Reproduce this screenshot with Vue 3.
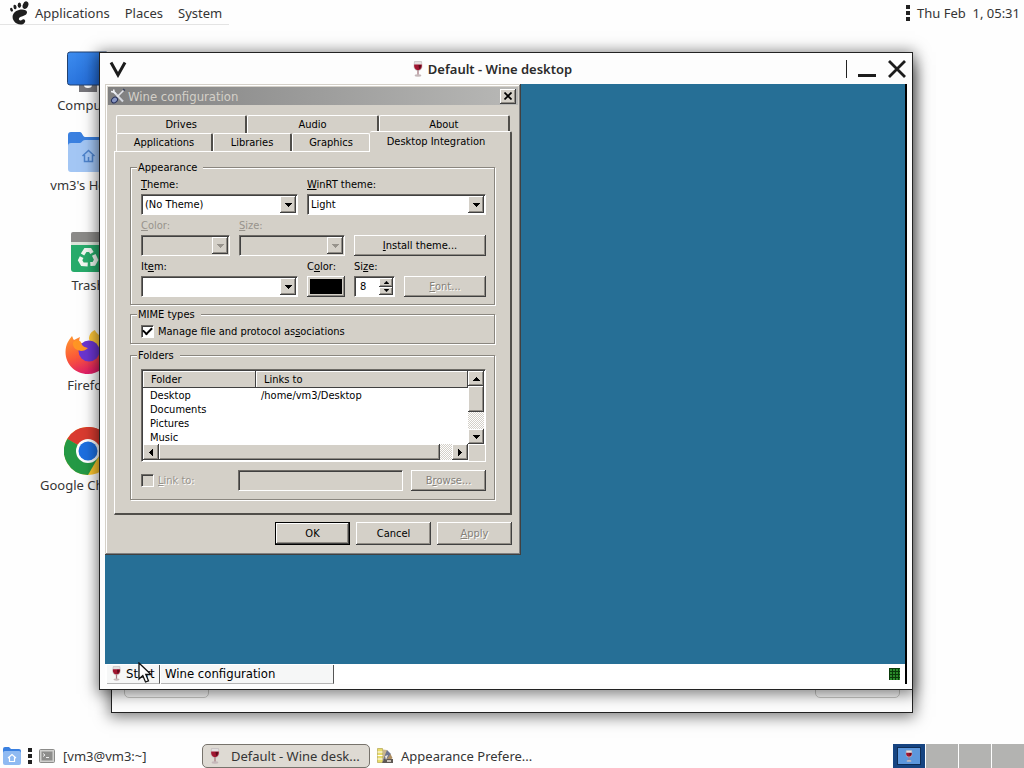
<script setup>
import { ref } from 'vue'

const shortcuts = [
  { id: 'computer', label: 'Computer' },
  { id: 'home', label: "vm3's Home" },
  { id: 'trash', label: 'Trash' },
  { id: 'firefox', label: 'Firefox' },
  { id: 'chrome', label: 'Google Chrome' }
]

const backTabs = ['Drives', 'Audio', 'About']
const frontTabs = ['Applications', 'Libraries', 'Graphics', 'Desktop Integration']
const activeTab = ref('Desktop Integration')

const folders = [
  { name: 'Desktop', link: '/home/vm3/Desktop' },
  { name: 'Documents', link: '' },
  { name: 'Pictures', link: '' },
  { name: 'Music', link: '' }
]

const theme = ref('(No Theme)')
const winrt = ref('Light')
const item = ref('')
const fontSize = ref('8')
const manageMime = ref(true)
const linkTo = ref(false)
const workspace = ref(1)
</script>

<template>
  <div class="screen">
    <svg class="defs" aria-hidden="true">
      <symbol id="glass" viewBox="0 0 16 16">
        <path d="M4.500.5h7l.5 4.500c0 3-1.500 4.500-4 4.500s-4-1.500-4-4.500z" fill="#e3dfe0" stroke="#b9b4b6" stroke-width=".6" />
        <path d="M4.200 3.500h7.600c.5 3.500-1.300 5.500-3.800 5.500S3.700 7 4.200 3.500z" fill="#a01530" />
        <path d="M8.500 4h2.600c0 2-.8 3.500-2 4z" fill="#5b0a1c" />
        <path d="M8 9v5" stroke="#a67a82" stroke-width="1.300" />
        <ellipse cx="8" cy="14.500" rx="3.300" ry="1.200" fill="#c5b8ba" />
      </symbol>
      <symbol id="down" viewBox="0 0 7 4"><path d="M0 0h7v1H6v1H5v1H4v1H3V3H2V2H1V1H0z" fill="currentColor" /></symbol>
      <symbol id="up" viewBox="0 0 7 4"><path d="M0 4h7V3H6V2H5V1H4V0H3v1H2v1H1v1H0z" fill="currentColor" /></symbol>
      <symbol id="left" viewBox="0 0 4 7"><path d="M4 0v7H3V6H2V5H1V4H0V3h1V2h1V1h1V0z" fill="currentColor" /></symbol>
      <symbol id="right" viewBox="0 0 4 7"><path d="M0 0v7h1V6h1V5h1V4h1V3H3V2H2V1H1V0z" fill="currentColor" /></symbol>
    </svg>

    <header class="top-panel">
      <nav class="menus">
        <svg class="foot" viewBox="0 0 20 24">
          <g fill="#1f1f1f">
            <ellipse cx="16.500" cy="4.200" rx="2.700" ry="3.900" transform="rotate(22 16.500 4.200)" />
            <ellipse cx="10.400" cy="4.300" rx="1.700" ry="2.700" />
            <ellipse cx="6" cy="6" rx="1.500" ry="2.300" transform="rotate(-15 6 6)" />
            <ellipse cx="2.500" cy="8.800" rx="1.300" ry="2" transform="rotate(-25 2.500 8.800)" />
            <path d="M18 11.500c.3-3.500-7-4-10.800-1.400-3.900 2.600-4.600 6.200-2.400 9.600 2 3.500 6.500 4.600 9.500 3.300 2.600-1.300 2.400-4.600.4-4.800-1.600-.2-1.600 1.400-3.300 1.200-1.800-.2-2.200-2-.4-3.100 2.200-1.300 6.700-1.600 7-4.800z" />
          </g>
        </svg>
        <a href="#">Applications</a>
        <a href="#">Places</a>
        <a href="#">System</a>
      </nav>
      <div class="clock">
        <span class="grip"></span>
        <time>Thu Feb &nbsp;1, 05:31</time>
      </div>
    </header>

    <main class="desktop">
      <div class="shortcuts">
        <a v-for="s in shortcuts" :key="s.id" href="#" class="shortcut" :class="s.id">
          <svg v-if="s.id === 'computer'" viewBox="0 0 48 48">
            <defs>
              <linearGradient id="scr" x1="0" y1="0" x2="1" y2="1">
                <stop offset="0" stop-color="#3d8df0" />
                <stop offset="1" stop-color="#1c62cf" />
              </linearGradient>
            </defs>
            <path d="M15 37h18v8H15z" fill="#77767b" />
            <path d="M20 38h8a4 3 0 0 1-8 0z" fill="#fff" />
            <rect x="3.500" y="5" width="41" height="33" rx="2.500" fill="url(#scr)" stroke="#23416e" />
          </svg>
          <svg v-else-if="s.id === 'home'" viewBox="0 0 48 48">
            <path d="M4 8a3 3 0 0 1 3-3h9c2 0 3 5 5 5h20a3 3 0 0 1 3 3v10H4z" fill="#3a80e0" />
            <path d="M4 19a3 3 0 0 1 3-3h9c2 0 2-3 5-3h20a3 3 0 0 1 3 3v26a3 3 0 0 1-3 3H7a3 3 0 0 1-3-3z" fill="#a3c6f4" />
            <path d="M18.500 29l6-5.500 6 5.500M20.500 28v6.500h8V28M24.500 34v-4" fill="none" stroke="#4d83cc" stroke-width="1.500" />
          </svg>
          <svg v-else-if="s.id === 'trash'" viewBox="0 0 48 48">
            <path d="M7 18h36v24a3 3 0 0 1-3 3H10a3 3 0 0 1-3-3z" fill="#27ab6b" />
            <path d="M7 14h36v4H7z" fill="#dce3da" />
            <path d="M7 7a2 2 0 0 1 2-2h32a2 2 0 0 1 2 2v8H7z" fill="#8b8a88" />
            <g fill="none" stroke="#f1f8f2" stroke-width="4">
              <path d="M18.500 27.500l3-4.500h4.500l2 3" />
              <path d="M18.500 27.500l3-4.500h4.500l2 3" transform="rotate(120 24 31)" />
              <path d="M18.500 27.500l3-4.500h4.500l2 3" transform="rotate(240 24 31)" />
            </g>
          </svg>
          <svg v-else-if="s.id === 'firefox'" viewBox="0 0 48 48">
            <defs>
              <linearGradient id="fox" x1="0" y1="0" x2=".4" y2="1">
                <stop offset="0" stop-color="#ff9a2e" />
                <stop offset=".55" stop-color="#fb5a38" />
                <stop offset="1" stop-color="#e01f66" />
              </linearGradient>
            </defs>
            <path d="M25 12c0-5 3-8 6-9 1 5 14 9 14 24l-10 8z" fill="#fdc63a" />
            <path d="M1.500 25C1.500 17 5 13 8 9c1 2 1 3 2 4 2-1 4-2 6-3-1 3-1 4 0 6 4 0 7 1 9 4l17 3c3 2 3 4 3 6-2 10-10 18-21 18C11 47 1.500 37 1.500 25z" fill="url(#fox)" />
            <circle cx="25" cy="24" r="10.500" fill="#6b35d0" />
            <path d="M17 15c-3-3-9-2-8 3 1 4 4 5 8 6 3 0 5-1 7-3-3-1-6-1-7-6z" fill="#ff9524" />
          </svg>
          <svg v-else viewBox="0 0 48 48">
            <circle cx="24" cy="24" r="24" fill="#fbc530" />
            <path d="M24 24L3.200 12A24 24 0 0 1 44.800 12z" fill="#d93b30" />
            <path d="M24 12h20.800A24 24 0 0 0 24 0z" fill="#d93b30" />
            <path d="M3.200 12A24 24 0 0 0 24 48l10.400-18z" fill="#249945" />
            <path d="M24 24L3.200 12l9 16z" fill="#249945" />
            <circle cx="24" cy="24" r="12" fill="#fff" />
            <circle cx="24" cy="24" r="9.500" fill="#1d6fe0" />
          </svg>
          <span>{{ s.label }}</span>
        </a>
      </div>

      <section class="back-window">
        <span class="ghost help"></span>
        <span class="ghost close"></span>
      </section>

      <section class="window">
        <div class="window-title">
          <button class="wm-btn shade" aria-label="Window menu">
            <svg viewBox="0 0 18 18"><path d="M2 2.500L9 15l7-12.500" fill="none" stroke="#1c1c1c" stroke-width="3" /></svg>
          </button>
          <h1>
            <svg><use href="#glass" /></svg>
            Default - Wine desktop
          </h1>
          <div class="wm-controls">
            <button class="wm-btn" aria-label="Minimize">
              <svg viewBox="0 0 18 18"><path d="M0 15.500h18" stroke="#1c1c1c" stroke-width="3" /></svg>
            </button>
            <button class="wm-btn" aria-label="Close">
              <svg viewBox="0 0 18 18"><path d="M1 1l16 16M17 1L1 17" stroke="#1c1c1c" stroke-width="2.800" /></svg>
            </button>
          </div>
        </div>

        <div class="wine">
          <div class="wine-desktop">
            <form class="dialog" @submit.prevent>
              <div class="dialog-title">
                <svg viewBox="0 0 16 16">
                  <path d="M3 3l10 10.500" stroke="#d5d8df" stroke-width="2" />
                  <path d="M1 3.500l2.500.5.500-2.500M3.500 3.500L6 6" stroke="#eef0f4" stroke-width="1.600" fill="none" />
                  <path d="M13.500 2.500L7 9" stroke="#e2e4ea" stroke-width="1.600" />
                  <path d="M13 1l2 1.500" stroke="#39435f" stroke-width="1.500" />
                  <ellipse cx="4.500" cy="12" rx="3.200" ry="2.600" fill="#8796c4" stroke="#27315b" transform="rotate(-40 4.500 12)" />
                </svg>
                <h2>Wine configuration</h2>
                <button type="button" class="btn close" aria-label="Close">
                  <svg viewBox="0 0 8 8"><path d="M.5.5l7 7M7.500.5l-7 7" stroke="#000" stroke-width="1.700" /></svg>
                </button>
              </div>

              <div class="dialog-body">
                <div class="tabs back" role="tablist">
                  <button v-for="t in backTabs" :key="t" type="button" role="tab" class="tab">{{ t }}</button>
                </div>
                <div class="tabs front" role="tablist">
                  <button
                    v-for="t in frontTabs"
                    :key="t"
                    type="button"
                    role="tab"
                    class="tab"
                    :class="{ active: t === activeTab }"
                    :aria-selected="t === activeTab"
                  >{{ t }}</button>
                </div>

                <div class="page">
                  <fieldset class="appearance">
                    <legend>Appearance</legend>
                    <div class="row">
                      <div class="field theme">
                        <label for="theme"><u>T</u>heme:</label>
                        <div class="combo">
                          <select id="theme" v-model="theme"><option>(No Theme)</option></select>
                          <span class="btn arrow"><svg><use href="#down" /></svg></span>
                        </div>
                      </div>
                      <div class="field grow">
                        <label for="winrt"><u>W</u>inRT theme:</label>
                        <div class="combo">
                          <select id="winrt" v-model="winrt"><option>Light</option><option>Dark</option></select>
                          <span class="btn arrow"><svg><use href="#down" /></svg></span>
                        </div>
                      </div>
                    </div>
                    <div class="row">
                      <div class="field shade-color disabled">
                        <label for="tcolor"><u>C</u>olor:</label>
                        <div class="combo">
                          <select id="tcolor" disabled></select>
                          <span class="btn arrow"><svg><use href="#down" /></svg></span>
                        </div>
                      </div>
                      <div class="field shade-size disabled">
                        <label for="tsize"><u>S</u>ize:</label>
                        <div class="combo">
                          <select id="tsize" disabled></select>
                          <span class="btn arrow"><svg><use href="#down" /></svg></span>
                        </div>
                      </div>
                      <button type="button" class="btn grow"><u>I</u>nstall theme...</button>
                    </div>
                    <div class="row">
                      <div class="field theme">
                        <label for="item">It<u>e</u>m:</label>
                        <div class="combo">
                          <select id="item" v-model="item"><option value=""></option></select>
                          <span class="btn arrow"><svg><use href="#down" /></svg></span>
                        </div>
                      </div>
                      <div class="field color">
                        <label for="color">C<u>o</u>lor:</label>
                        <button id="color" type="button" class="btn swatch"><span></span></button>
                      </div>
                      <div class="field size">
                        <label for="size">Si<u>z</u>e:</label>
                        <div class="spin">
                          <input id="size" v-model="fontSize" type="text">
                          <div class="spin-btns">
                            <button type="button" class="btn" aria-label="Increase"><svg><use href="#up" /></svg></button>
                            <button type="button" class="btn" aria-label="Decrease"><svg><use href="#down" /></svg></button>
                          </div>
                        </div>
                      </div>
                      <button type="button" class="btn grow" disabled><u>F</u>ont...</button>
                    </div>
                  </fieldset>

                  <fieldset class="mime">
                    <legend>MIME types</legend>
                    <label class="check">
                      <input v-model="manageMime" type="checkbox">
                      <span>Manage file and protocol as<u>s</u>ociations</span>
                    </label>
                  </fieldset>

                  <fieldset class="folders">
                    <legend>Folders</legend>
                    <div class="listview">
                      <table>
                        <thead>
                          <tr><th class="name">Folder</th><th>Links to</th></tr>
                        </thead>
                        <tbody>
                          <tr v-for="f in folders" :key="f.name">
                            <td>{{ f.name }}</td>
                            <td>{{ f.link }}</td>
                          </tr>
                        </tbody>
                      </table>
                      <div class="vscroll">
                        <button type="button" class="btn" aria-label="Scroll up"><svg><use href="#up" /></svg></button>
                        <span class="btn thumb"></span>
                        <button type="button" class="btn end" aria-label="Scroll down"><svg><use href="#down" /></svg></button>
                      </div>
                      <div class="hscroll">
                        <button type="button" class="btn" aria-label="Scroll left"><svg><use href="#left" /></svg></button>
                        <span class="btn thumb"></span>
                        <button type="button" class="btn end" aria-label="Scroll right"><svg><use href="#right" /></svg></button>
                      </div>
                    </div>
                    <div class="link-row">
                      <label class="check disabled">
                        <input v-model="linkTo" type="checkbox" disabled>
                        <span><u>L</u>ink to:</span>
                      </label>
                      <input class="path" type="text" aria-label="Link target" disabled>
                      <button type="button" class="btn" disabled>B<u>r</u>owse...</button>
                    </div>
                  </fieldset>
                </div>

                <div class="actions">
                  <button type="submit" class="btn default">OK</button>
                  <button type="button" class="btn">Cancel</button>
                  <button type="button" class="btn" disabled><u>A</u>pply</button>
                </div>
              </div>
            </form>
          </div>

          <div class="wine-bar">
            <button class="wine-item"><svg><use href="#glass" /></svg>Start</button>
            <button class="wine-item task">Wine configuration</button>
            <span class="tray"></span>
          </div>
        </div>
      </section>

      <svg class="cursor" viewBox="0 0 14 22">
        <path d="M1 1v16l3.800-3.500L7.500 20l3-1.200L7.800 12.500H13z" fill="#fff" stroke="#111" stroke-width="1.300" />
      </svg>
    </main>

    <footer class="bottom-panel">
      <button class="launcher" aria-label="Files">
        <svg viewBox="0 0 20 20">
          <path d="M1 3a2 2 0 0 1 2-2h4l2 2h8a2 2 0 0 1 2 2v4H1z" fill="#3a80e0" />
          <rect x="1" y="5" width="18" height="14" rx="2" fill="#8fbaf2" />
          <path d="M6 12l4-3.500 4 3.500M7.500 11.500v4h5v-4" fill="none" stroke="#fff" stroke-width="1.200" />
        </svg>
      </button>
      <span class="grip"></span>
      <button class="task terminal">
        <svg viewBox="0 0 16 16">
          <rect x=".5" y="1.500" width="15" height="13" rx="1" fill="#d0d0ce" stroke="#8b8b89" />
          <rect x="2.500" y="3.500" width="11" height="9" fill="#8d8d8b" />
          <path d="M4 5.500l2 1.500-2 1.500M7 9.500h3" fill="none" stroke="#eee" />
        </svg>
        [vm3@vm3:~]
      </button>
      <button class="task active">
        <svg><use href="#glass" /></svg>
        Default - Wine desk...
      </button>
      <button class="task">
        <svg viewBox="0 0 16 16">
          <path d="M.5.5h5v14h-5z" fill="#e9dc6a" stroke="#a8993c" stroke-width=".6" />
          <path d="M.5 4h5M.5 7.500h5M.5 11h5" stroke="#fff" />
          <path d="M6 1.500l4 .5 1 4-5 6z" fill="#c9b58e" />
          <path d="M10 2l4 4-5 8-3-2z" fill="#6d7590" />
          <path d="M13.500 6l2 4-6 5H7z" fill="#ad8d60" />
          <path d="M7 11h9v4H5z" fill="#5d5854" />
          <path d="M8 8l3-1-2 5z" fill="#f1e9dc" />
          <path d="M10 12h4v2h-4z" fill="#c9c2b8" />
        </svg>
        Appearance Prefere...
      </button>
      <div class="pager">
        <button
          v-for="n in 4"
          :key="n"
          class="cell"
          :class="{ current: n === workspace }"
          :aria-label="'Workspace ' + n"
          @click="workspace = n"
        >
          <span v-if="n === 1" class="mini"><svg><use href="#glass" /></svg></span>
        </button>
      </div>
    </footer>
  </div>
</template>

<style>
body {
  margin: 0;
  background: #fff;
}
</style>

<style scoped>
* {
  box-sizing: border-box;
}
.screen {
  min-height: 100vh;
  display: grid;
  grid-template-rows: 25px 1fr 24px;
  overflow: hidden;
  background: #fefefe;
  color: #353535;
  font: 13px/18px "Noto Sans", "Open Sans", sans-serif;
}
.defs {
  position: absolute;
  width: 0;
  height: 0;
}
button, input, select {
  margin: 0;
  padding: 0;
  border: 0;
  border-radius: 0;
  background: none;
  color: inherit;
  font: inherit;
  outline: 0;
  appearance: none;
}
a {
  color: inherit;
  text-decoration: none;
}
svg {
  display: block;
  flex: none;
}

/* top panel */
.top-panel {
  display: flex;
  justify-content: space-between;
}
.menus {
  display: flex;
  align-items: center;
  gap: 15px;
  padding: 2px 7px 0 9px;
  border-bottom: 1px solid #e4e4e4;
}
.foot {
  width: 20px;
  height: 24px;
  margin-right: -9px;
}
.clock {
  display: flex;
  align-items: center;
  gap: 7px;
  padding: 1px 4px 0 0;
}
.grip {
  width: 4px;
  height: 16px;
  background: repeating-linear-gradient(#222 0 4px, transparent 4px 6px);
}

/* desktop */
.desktop {
  position: relative;
  min-height: 640px;
}
.shortcuts {
  display: flex;
  flex-direction: column;
  gap: 32px;
  width: 120px;
  margin-left: 28px;
  padding-top: 22px;
}
.shortcut {
  display: flex;
  flex-direction: column;
  align-items: center;
  line-height: 20px;
}
.shortcut.computer {
  margin-bottom: -20px;
}
.shortcut svg {
  width: 48px;
  height: 48px;
}

.back-window,
.window {
  position: absolute;
  border: 1px solid #222;
  background: #fdfdfd;
  box-shadow: 0 2px 14px 2px rgba(0, 0, 0, .5);
}
.back-window {
  top: 40px;
  right: 111px;
  bottom: 31px;
  left: 111px;
  display: flex;
  justify-content: space-between;
  align-items: flex-end;
  padding: 0 12px 14px;
}
.ghost {
  width: 85px;
  height: 30px;
  border: 1px solid #c9c9c6;
  border-radius: 5px;
}
.window {
  top: 27px;
  right: 111px;
  bottom: 54px;
  left: 99px;
  display: flex;
  flex-direction: column;
}
.window-title {
  display: flex;
  align-items: center;
  height: 31px;
}
.window-title h1 {
  flex: 1;
  display: flex;
  align-items: center;
  justify-content: center;
  gap: 2px;
  margin: 0;
  color: #2b2b2b;
  font-size: 13px;
  font-weight: 600;
}
.window-title h1 svg {
  width: 16px;
  height: 16px;
}
.wm-btn {
  display: grid;
  place-items: center;
  width: 30px;
  height: 30px;
}
.wm-btn svg {
  width: 18px;
  height: 18px;
}
.wm-btn.shade {
  width: 36px;
}
.wm-controls {
  display: flex;
  align-items: center;
  padding-left: 6px;
  background: linear-gradient(#222, #222) 0 50% / 1px 18px no-repeat;
}

/* wine virtual desktop */
.wine {
  flex: 1;
  display: flex;
  flex-direction: column;
  margin: 0 5px 5px;
  border-right: 2px solid #000;
  color: #000;
}
.wine-desktop {
  flex: 1;
  background: #266f96;
}
.wine-bar {
  display: flex;
  align-items: center;
  gap: 1px;
  height: 20px;
  padding: 0 5px 0 2px;
  background: #fff;
  font: 13px/18px "DejaVu Sans Condensed", "DejaVu Sans", sans-serif;
}
.wine-item {
  display: flex;
  align-items: center;
  gap: 2px;
  width: 53px;
  height: 19px;
  padding-left: 2px;
  border-right: 1px solid #555;
  border-bottom: 1px solid #b5b5b5;
  background: #f6f7f7;
}
.wine-item svg {
  width: 15px;
  height: 15px;
}
.wine-item.task {
  width: 173px;
  padding-left: 4px;
}
.tray {
  width: 11px;
  height: 12px;
  margin-left: auto;
  background: repeating-linear-gradient(#0a3a0a 0 1px, transparent 1px 3px), repeating-linear-gradient(90deg, #0a3a0a 0 1px, #2a8a2a 1px 3px);
}

/* dialog */
.dialog {
  width: 416px;
  padding: 3px;
  background: #d4d0c8;
  box-shadow: inset -1px -1px #404040, inset 1px 1px #d4d0c8, inset -2px -2px #808080, inset 2px 2px #fff;
  font: 11px/13px "DejaVu Sans Condensed", "DejaVu Sans", sans-serif;
}
.dialog-title {
  display: flex;
  align-items: center;
  height: 18px;
  padding: 0 2px;
  background: linear-gradient(90deg, #808080, #b8b8b6);
  color: #d4d0c8;
}
.dialog-title > svg {
  width: 16px;
  height: 16px;
}
.dialog-title h2 {
  flex: 1;
  margin: 0 0 0 2px;
  font-size: 13px;
  font-weight: 400;
}
.dialog-body {
  padding: 10px 6px 7px;
}
.btn {
  display: grid;
  place-items: center;
  background: #d4d0c8;
  box-shadow: inset -1px -1px #404040, inset 1px 1px #fff, inset -2px -2px #908c85;
}
.btn:disabled {
  color: #85817a;
  text-shadow: 1px 1px #fff;
}
button.btn {
  display: flex;
  align-items: center;
  justify-content: center;
  white-space: pre;
}
.btn svg {
  width: 7px;
  height: 4px;
}
.btn.close {
  width: 16px;
  height: 15px;
}
.btn.close svg {
  width: 8px;
  height: 8px;
}

.tabs {
  display: flex;
  padding: 0 2px;
}
.tab {
  height: 18px;
  border-top: 1px solid #fff;
  border-left: 1px solid #fff;
  border-right: 2px solid #504e4a;
  border-radius: 2px 2px 0 0;
}
.tabs.back .tab {
  flex: 1;
}
.front .tab:nth-child(1) {
  width: 97px;
}
.front .tab:nth-child(2) {
  width: 79px;
}
.front .tab:nth-child(3) {
  width: 78px;
  border-right: 1px solid #fff;
}
.front .tab.active {
  flex: 1;
  height: 21px;
  margin: -2px -2px -1px 0;
  padding: 0 8px 2px 0;
  border-left: 0;
  background: #d4d0c8;
}
.tabs.front {
  position: relative;
}
.page {
  display: flex;
  flex-direction: column;
  padding: 9px 15px 13px;
  border: 1px solid #fff;
  border-right: 2px solid #504e4a;
  border-bottom: 2px solid #504e4a;
}

fieldset {
  min-width: 0;
  margin: 0;
  padding: 4px 8px 7px 10px;
  border: 1px solid #8a867f;
  box-shadow: 1px 1px #fff, inset 1px 1px #fff;
}
legend {
  margin-left: -4px;
  padding: 0 6px 0 1px;
  background: #d4d0c8;
}
fieldset.mime {
  margin: 3px 0 5px;
  padding-bottom: 5px;
}
fieldset.folders {
  padding-top: 7px;
  padding-bottom: 8px;
}
.row {
  display: flex;
  align-items: flex-end;
  gap: 9px;
}
.row + .row {
  margin-top: 4px;
}
.row .btn.grow {
  height: 21px;
}
.field {
  display: flex;
  flex-direction: column;
  gap: 3px;
}
.grow {
  flex: 1;
}
.theme {
  width: 157px;
}
.shade-color {
  width: 89px;
}
.shade-size {
  width: 106px;
}
.color {
  width: 38px;
}
.size {
  width: 41px;
}
.disabled {
  color: #97938c;
}
.combo,
.spin,
.path,
.listview {
  border: 1px solid #fff;
  border-top-color: #6e6b66;
  border-left-color: #6e6b66;
  background: #fff;
  box-shadow: inset 1px 1px #404040;
}
.combo,
.spin {
  display: flex;
  height: 21px;
  padding: 1px;
}
.combo select {
  flex: 1;
  min-width: 0;
  padding-left: 2px;
  opacity: 1;
}
.disabled .combo,
.path {
  background: #d4d0c8;
}
.arrow {
  width: 16px;
}
.swatch {
  height: 21px;
}
.swatch span {
  width: 32px;
  height: 15px;
  background: #000;
}
.spin input {
  flex: 1;
  min-width: 0;
  padding-left: 4px;
}
.spin-btns {
  display: grid;
  grid-template-rows: 1fr 1fr;
  width: 14px;
}
.spin-btns svg {
  width: 5px;
  height: 3px;
}
.check {
  display: flex;
  align-items: center;
  gap: 4px;
  height: 13px;
}
.check input {
  width: 13px;
  height: 13px;
  flex: none;
  display: grid;
  place-items: center;
  border: 1px solid #fff;
  border-top-color: #6e6b66;
  border-left-color: #6e6b66;
  background: #fff;
  box-shadow: inset 1px 1px #404040;
}
.check input:checked::before {
  content: "";
  width: 7px;
  height: 4px;
  margin-bottom: 3px;
  border-left: 2px solid #000;
  border-bottom: 2px solid #000;
  transform: rotate(-45deg);
}
.check input:disabled {
  background: #d4d0c8;
}
.check.disabled {
  text-shadow: 1px 1px #fff;
}

.listview {
  display: grid;
  grid-template-columns: 1fr 16px;
  grid-template-rows: 73px 16px;
  padding: 1px;
  background: linear-gradient(#d4d0c8, #d4d0c8) 100% 100% / 16px 16px no-repeat #fff;
}
table {
  width: 100%;
  border-collapse: separate;
  border-spacing: 0;
  table-layout: fixed;
  align-self: start;
}
th,
td {
  height: 14px;
  padding: 0 0 0 7px;
  font-weight: 400;
  text-align: left;
}
td + td {
  padding-left: 5px;
}
th {
  height: 17px;
  padding-left: 8px;
  background: #d4d0c8;
  box-shadow: inset -1px -1px #404040, inset 1px 1px #fff;
}
th.name {
  width: 113px;
}
.vscroll,
.hscroll {
  display: flex;
  background: repeating-conic-gradient(#fff 0 25%, #d4d0c8 0 50%) 0 0 / 2px 2px;
}
.vscroll {
  flex-direction: column;
}
.vscroll button {
  height: 15px;
}
.vscroll .thumb {
  height: 26px;
}
.hscroll button {
  width: 16px;
}
.hscroll .thumb {
  width: 281px;
}
.vscroll .end {
  margin-top: auto;
}
.hscroll .end {
  margin-left: auto;
}
.hscroll svg {
  width: 4px;
  height: 7px;
}
.link-row {
  display: flex;
  align-items: center;
  margin-top: 8px;
}
.link-row .check {
  width: 97px;
}
.path {
  flex: 1;
  min-width: 0;
  height: 21px;
  margin-right: 8px;
}
.link-row .btn {
  width: 75px;
  height: 21px;
}
.actions {
  display: flex;
  justify-content: flex-end;
  gap: 6px;
  margin-top: 7px;
}
.actions .btn {
  width: 75px;
  height: 23px;
}
.actions .default {
  border: 1px solid #000;
}

.cursor {
  position: absolute;
  bottom: 60px;
  left: 138px;
  width: 14px;
  height: 22px;
}

/* bottom panel */
.bottom-panel {
  display: flex;
  align-items: center;
  padding-left: 2px;
}
.launcher {
  margin-right: 6px;
}
.launcher svg {
  width: 20px;
  height: 20px;
}
.bottom-panel .task {
  display: flex;
  align-items: center;
  gap: 8px;
  width: 168px;
  height: 24px;
  padding-left: 6px;
  border: 1px solid transparent;
  white-space: nowrap;
}
.bottom-panel .task.terminal {
  margin-right: 2px;
}
.bottom-panel .task.active {
  padding-left: 4px;
  border-color: #77736c;
  border-radius: 5px;
  background: #dedad3;
}
.bottom-panel .task svg {
  width: 16px;
  height: 16px;
}
.pager {
  display: grid;
  grid-template-columns: repeat(4, 32px);
  gap: 1px;
  align-self: stretch;
  margin-left: auto;
}
.cell {
  display: grid;
  place-items: center;
  background: #b3b3b1;
}
.cell.current {
  background: #164481;
}
.mini {
  display: grid;
  place-items: center;
  width: 24px;
  height: 18px;
  border: 1px solid #0e2c55;
  background: #5d97dc;
}
.mini svg {
  width: 12px;
  height: 12px;
}
</style>
